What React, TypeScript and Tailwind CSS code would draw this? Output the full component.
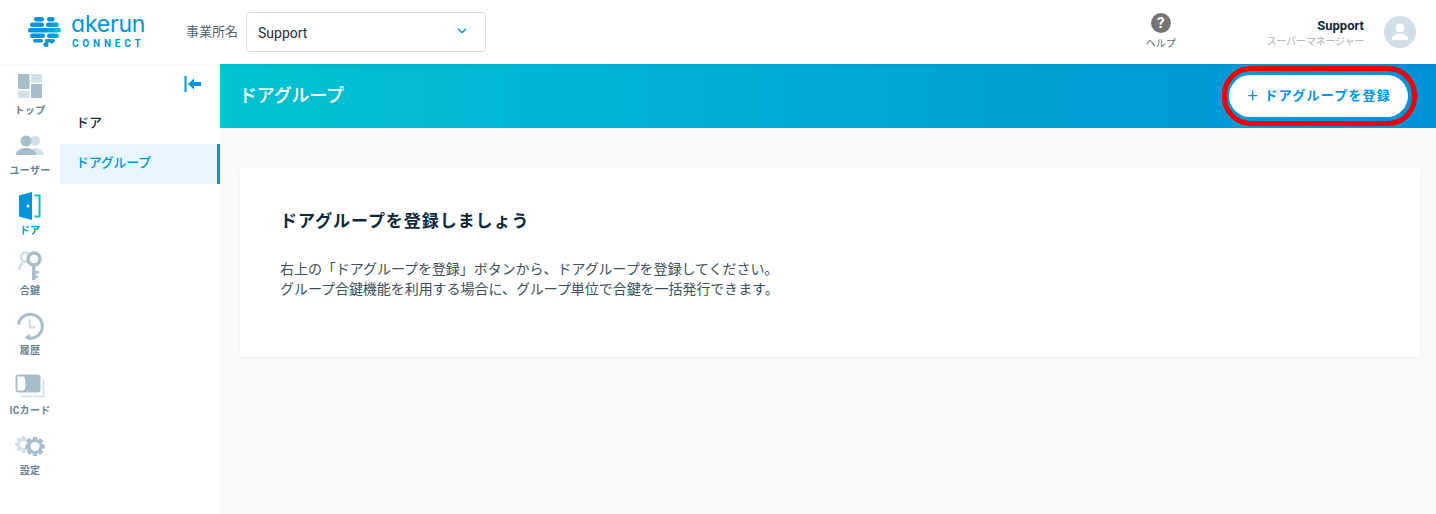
import { ChevronDown } from "lucide-react";

const font = "font-['Roboto','Noto_Sans_CJK_JP',sans-serif]";

function TopIcon() {
  return (
    <svg width="24" height="24" viewBox="0 0 24 24">
      <rect x="0" y="0" width="11.500" height="15" rx="1" fill="#a6bdca" />
      <rect x="13" y="0" width="11" height="8.500" rx="1" fill="#cfe0e8" />
      <rect x="0" y="16.500" width="11.500" height="7.500" rx="1" fill="#cfe0e8" />
      <rect x="13" y="10" width="11" height="14" rx="1" fill="#a6bdca" />
    </svg>
  );
}

function UserIcon() {
  return (
    <svg width="28" height="22" viewBox="0 0 28 22">
      <circle cx="19" cy="6" r="5" fill="#cfe0e8" />
      <path d="M14 20c1-5 4-7 6-7 4 0 7 3 8 7z" fill="#cfe0e8" />
      <circle cx="10" cy="6" r="5.500" fill="#a6bdca" />
      <path d="M0 20c0-5 5-7 10-7s10 2 10 7z" fill="#a6bdca" />
    </svg>
  );
}

function DoorIcon() {
  return (
    <svg width="22" height="28" viewBox="0 0 22 28">
      <path d="M0 3.500 13 0v28L0 24.500z" fill="#0095da" />
      <circle cx="9" cy="14" r="1.500" fill="#fff" />
      <path d="M15.500 3.500H20.500V24.500H15.500" fill="none" stroke="#00c3d0" strokeWidth="2" />
    </svg>
  );
}

function KeyIcon() {
  return (
    <svg width="26" height="30" viewBox="0 0 26 30">
      <circle cx="8.500" cy="6" r="4.500" fill="none" stroke="#cfe0e8" strokeWidth="2.500" />
      <path d="M6 10 2.500 18M2 14l2.500 1.500M1 17l2.500 1.500" fill="none" stroke="#cfe0e8" strokeWidth="2.500" />
      <circle cx="17" cy="8" r="6" fill="#fff" stroke="#a6bdca" strokeWidth="3.500" />
      <path d="M15 14h3.500v15H15z" fill="#a6bdca" />
      <path d="M18 20h4v2.500h-4zM18 24.500h3V27h-3z" fill="#a6bdca" />
    </svg>
  );
}

function HistoryIcon() {
  return (
    <svg width="28" height="28" viewBox="0 0 28 28">
      <path d="M2.500 12.500A12 12 0 1 1 12 26" fill="none" stroke="#a6bdca" strokeWidth="3" />
      <path d="M14 21.500 8.500 26l5.500 2z" fill="#a6bdca" />
      <path d="M12.500 7h2.500v7h5v2.500h-7.500z" fill="#cfe0e8" />
    </svg>
  );
}

function CardIcon() {
  return (
    <svg width="30" height="24" viewBox="0 0 30 24">
      <path d="M28.500 6v16.500H6" fill="none" stroke="#cfe0e8" strokeWidth="1.500" />
      <rect x="1" y="1" width="24" height="17" rx="2" fill="#a6bdca" stroke="#a6bdca" />
      <path d="M2.500 2.500H9c2 3 2 11 0 14H2.500z" fill="#fff" />
    </svg>
  );
}

function Gear({ color, size, hole }: { color: string; size: number; hole: number }) {
  const teeth = [0, 45, 90, 135, 180, 225, 270, 315];
  return (
    <svg width={size} height={size} viewBox="0 0 24 24">
      {teeth.map((a) => (
        <rect key={a} x="9.500" y="0.500" width="5" height="23" rx="1" fill={color} transform={`rotate(${a} 12 12)`} />
      ))}
      <circle cx="12" cy="12" r={hole + 3.500} fill={color} />
      <circle cx="12" cy="12" r={hole} fill="#fff" />
    </svg>
  );
}

function SettingIcon() {
  return (
    <div className="flex h-[24px] w-[30px] items-center">
      <div className="-mt-1 -mr-[7px]">
        <Gear color="#cfe0e8" size={17} hole={5} />
      </div>
      <Gear color="#a6bdca" size={21} hole={5.500} />
    </div>
  );
}

function NavItem({ icon, label, active }: { icon: React.ReactNode; label: string; active?: boolean }) {
  return (
    <div className="flex h-[60px] flex-col items-center">
      <div className="mt-[2px] flex h-[32px] items-center justify-center">{icon}</div>
      <span
        className={`mt-[2px] whitespace-nowrap text-[10px] leading-[14px] font-bold tracking-[0.3px] ${active ? "text-[#0095da]" : "text-[#6a8391]"}`}
      >
        {label}
      </span>
    </div>
  );
}

function Logo() {
  return (
    <div className="ml-[28px] flex w-[157px] items-center">
      <svg width="34" height="32" viewBox="0 0 34 32">
        <defs>
          <linearGradient id="logoBar" x1="0" y1="0" x2="1" y2="0">
            <stop offset="0.55" stopColor="#0095da" />
            <stop offset="1" stopColor="#00c8cc" />
          </linearGradient>
        </defs>
        <g fill="#0095da">
          <rect x="6" y="1" width="10" height="4.500" rx="2.250" />
          <rect x="19" y="1" width="7.500" height="4.500" rx="2.250" />
          <rect x="2" y="6.500" width="14" height="4.500" rx="2.250" />
          <rect x="2" y="17.500" width="15" height="4.500" rx="2.250" />
          <rect x="5" y="23" width="10" height="3.500" rx="1.750" />
          <circle cx="18" cy="28.500" r="2.500" />
          <circle cx="24" cy="26" r="1.500" />
        </g>
        <rect x="18" y="6.500" width="13" height="4.500" rx="2.250" fill="url(#logoBar)" />
        <rect x="0" y="12" width="33" height="4.500" rx="2.250" fill="url(#logoBar)" />
        <rect x="19" y="17.500" width="12" height="4.500" rx="2.250" fill="url(#logoBar)" />
        <rect x="17" y="23" width="10" height="3.500" rx="1.750" fill="#0095da" />
      </svg>
      <div className="ml-[9px] -mt-[2px] flex flex-col items-start">
        <span className="font-['Inter',sans-serif] text-[23px] leading-[25px] font-normal tracking-[-0.2px] text-[#0095da] [font-feature-settings:'cv11']">akerun</span>
        <span className="ml-[1px] font-['Roboto',sans-serif] text-[10px] leading-[14px] font-bold tracking-[3.800px] text-[#0095da]">CONNECT</span>
      </div>
    </div>
  );
}

export default function App() {
  return (
    <div className={`flex h-[514px] w-[1436px] flex-col overflow-hidden bg-white ${font}`}>
      {/* header */}
      <header className="relative z-10 flex h-16 shrink-0 items-center bg-white shadow-[0_1px_4px_rgba(0,0,0,0.06)]">
        <Logo />
        <span className="ml-[1px] text-[13px] text-[#52656f]">事業所名</span>
        <div className="ml-2 flex h-10 w-[240px] items-center justify-between rounded border border-[#cfe0e8] pr-4 pl-[11px] text-sm text-[#2b2f33]">
          <span className="pt-[2px]">Support</span>
          <ChevronDown size={14} strokeWidth={2.500} className="-mt-[3px] text-[#0095da]" />
        </div>
        <div className="ml-auto flex w-[60px] flex-col items-center">
          <div className="flex h-5 w-5 items-center justify-center rounded-full bg-[#757575] text-[15px] leading-none font-bold text-white">?</div>
          <span className="mt-1 text-[10px] leading-[14px] text-[#5f6b72]">ヘルプ</span>
        </div>
        <div className="ml-[76px] flex flex-col items-end">
          <span className="pt-[2px] text-[13px] leading-[16px] font-bold text-[#0e2a3a]">Support</span>
          <span className="mt-[1px] text-[10px] leading-[14px] tracking-[-0.2px] text-[#a9b1b6]">スーパーマネージャー</span>
        </div>
        <div className="mr-5 ml-5 flex h-8 w-8 items-center justify-center overflow-hidden rounded-full bg-[#cfe0e8]">
          <svg width="20" height="20" viewBox="0 0 20 20" fill="#fff">
            <circle cx="10" cy="6" r="4.500" />
            <path d="M2 17c0-3.500 4-5 8-5s8 1.500 8 5v1H2z" />
          </svg>
        </div>
      </header>

      <div className="flex min-h-0 flex-1">
        {/* icon rail */}
        <nav className="flex w-[60px] shrink-0 flex-col bg-white pt-1 shadow-[1px_0_3px_rgba(0,0,0,0.03)]">
          <NavItem icon={<TopIcon />} label="トップ" />
          <NavItem icon={<UserIcon />} label="ユーザー" />
          <NavItem icon={<DoorIcon />} label="ドア" active />
          <NavItem icon={<KeyIcon />} label="合鍵" />
          <NavItem icon={<HistoryIcon />} label="履歴" />
          <NavItem icon={<CardIcon />} label="ICカード" />
          <NavItem icon={<SettingIcon />} label="設定" />
        </nav>

        {/* sub menu */}
        <aside className="flex w-40 shrink-0 flex-col bg-white">
          <div className="flex h-10 items-center justify-end pr-[18px]">
            <svg width="18" height="16" viewBox="0 0 18 16" fill="#0095da">
              <rect x="0.500" y="0" width="2" height="16" />
              <path d="M4 8l6-5.500V6h7v4h-7v3.500z" />
            </svg>
          </div>
          <div className="flex h-10 items-center px-4 pb-[2px] text-[13px] font-medium text-[#1f2933]">ドア</div>
          <div className="flex h-10 items-center border-r-[3px] border-[#0095da] bg-[#e8f7fe] px-4 pb-[2px] text-[13px] font-medium tracking-[-0.3px] text-[#0095da]">ドアグループ</div>
        </aside>

        {/* main */}
        <main className="flex min-w-0 flex-1 flex-col bg-[#fafafa]">
          <div className="flex h-16 shrink-0 items-center justify-between bg-gradient-to-r from-[#00c3d0] to-[#0090d6] pr-7 pl-[19px]">
            <h1 className="text-lg font-medium tracking-[-0.2px] text-white">ドアグループ</h1>
            <div className="relative">
              <button className="flex h-[42px] w-[179px] items-center justify-center rounded-full bg-white text-[13px] font-bold tracking-[1.200px] text-[#0095da]">
                ＋ ドアグループを登録
              </button>
              <div className="absolute -top-[9px] -right-[9px] -bottom-[9px] -left-[7px] rounded-[29px] border-[5px] border-[#f00000]" />
            </div>
          </div>
          <section className="mt-10 mr-4 ml-5 h-[189px] bg-white px-10 pt-[41px] shadow-[0_1px_3px_rgba(0,0,0,0.05)]">
            <h2 className="text-[17px] leading-6 font-bold tracking-[0.950px] text-[#0e2a3a]">ドアグループを登録しましょう</h2>
            <p className="mt-[26px] text-sm leading-5 tracking-[-0.050px] text-[#3d4f5a]">
              右上の「ドアグループを登録」ボタンから、ドアグループを登録してください。
              <br />
              グループ合鍵機能を利用する場合に、グループ単位で合鍵を一括発行できます。
            </p>
          </section>
        </main>
      </div>
    </div>
  );
}
